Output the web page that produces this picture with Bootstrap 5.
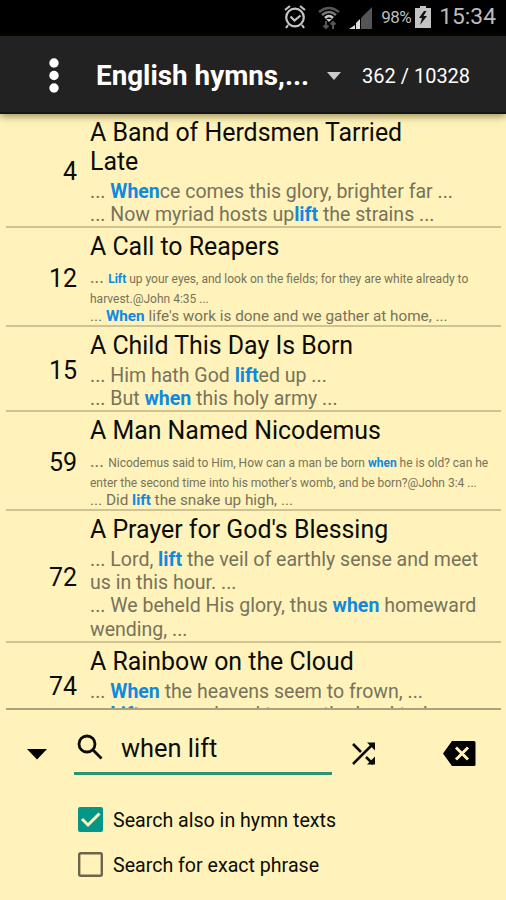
<!DOCTYPE html>
<html lang="en">
<head>
<meta charset="utf-8">
<meta name="viewport" content="width=device-width, initial-scale=1">
<title>English hymns</title>
<link href="https://cdn.jsdelivr.net/npm/bootstrap@5.3.0/dist/css/bootstrap.min.css" rel="stylesheet">
<style>
  body { width: 506px; height: 900px; background: #fff3bb; font-family: Roboto, "Liberation Sans", sans-serif; color: #0c0c08; white-space: nowrap; }
  svg { display: block; flex: none; }
  .statusbar { height: 36px; background: #000; color: #bdbdbd; padding-right: 10px; padding-bottom: 3px; }
  .clock { font-size: 22.8px; line-height: 34px; margin-left: 8px; }
  .charge { font-size: 17px; letter-spacing: -.5px; line-height: 34px; }
  .appbar { height: 78px; background: #222; color: #fff; padding: 3px 0 0 48px; border-bottom: 2px solid #151515; box-shadow: 0 2px 8px rgba(60,50,0,.55); z-index: 2; }
  .appname { font-size: 27.8px; font-weight: 700; margin-left: 36px; width: 231px; }
  .counter { font-size: 20px; margin-left: 21px; }
  .hymns { height: 596px; margin: 0 5px 0 6px; border-bottom: 2px solid #aaa37c; }
  .hymn { border-bottom: 2px solid #cdc492; padding-top: 4px; }
  .num { width: 71px; flex: none; font-size: 25px; text-align: right; line-height: 30px; }
  .body-col { margin-left: 13px; color: #77725a; font-size: 19.55px; line-height: 23.2px; }
  .ttl { font-size: 24.9px; line-height: 29px; color: #0c0c08; margin: 0 0 4.5px; font-weight: 400; }
  .long-ttl { margin-bottom: 3.5px; }
  .verse { font-size: 12px; line-height: 19.5px; }
  .verse-top { padding-top: 5px; }
  .dots { font-size: 17.5px; line-height: 10px; }
  .mid { font-size: 15.3px; line-height: 17px; margin-top: -1.5px; }
  b { color: #0f8ae0; font-weight: 700; }
  .h1r { height: 113px; } .h2r, .h4r { height: 99px; } .h3r { height: 85px; }
  .h1r { height: 114px; }
  .h5r { height: 132px; } .h6r { height: 84px; border: 0; }
  .first-shift { margin-top: -.5px; }
  .panel { height: 190px; }
  .field { width: 258px; height: 65px; border-bottom: 3px solid #2b9474; padding: 13px 0 0 3px; margin-left: 26px; }
  .query { font-size: 25.4px; margin: 2px 0 0 17px; }
  .collapse-ico { margin: 23px 0 0 25px; }
  .shuffle-ico { margin: 23px 0 0 16px; }
  .clear-ico { margin: 22px 0 0 62px; }
  .opts { padding-top: 22px; }
  .opt { height: 45px; padding-left: 78px; font-size: 19.6px; gap: 10px; }
  .opt span { padding-top: 2px; }
</style>
</head>
<body class="d-flex flex-column overflow-hidden m-0">
<header class="statusbar d-flex align-items-center justify-content-end flex-shrink-0">
  <svg width="24" height="26" viewBox="0 0 24 26" fill="none" stroke="#c4c4c4" stroke-width="2.200"><circle cx="12" cy="13.500" r="8.800"/><path d="M7.500 12.500l4 4 6-5M2 6l5-4M22 6l-5-4" /><path d="M5 21l-2 3M19 21l2 3"/></svg>
  <svg class="ms-2 me-1" width="28" height="26" viewBox="0 0 28 26" fill="none" stroke-width="2.5"><path d="M4 8q10-8 20 0" stroke="#555"/><path d="M7 11q7-6 14 0" stroke="#777"/><path d="M10 14q4-4 8 0" stroke="#c8c8c8"/><path d="M14 18l-3-3h6z" fill="#c8c8c8" stroke="none"/><path d="M11 17v7M8.500 21.500L11 24l2.500-2.500M18 25v-7M15.500 20.500L18 18l2.500 2.500" stroke="#555" stroke-width="2"/></svg>
  <svg width="26" height="26" viewBox="0 0 26 26"><path d="M2 25l6-4v4z" fill="#ddd"/><path d="M9 19l4-4v10H9z" fill="#ddd"/><path d="M14 14L25 3v22H14z" fill="#555"/></svg>
  <span class="charge ms-2">98%</span>
  <svg class="ms-1" width="16" height="22" viewBox="0 0 16 22"><path d="M5 0h6v2h5v20H0V2h5z" fill="#c4c4c4"/><path d="M9 5L4 12h3l-2 7 7-9H8.500l3-5z" fill="#111"/></svg>
  <span class="clock">15:34</span>
</header>
<nav class="appbar d-flex align-items-center flex-shrink-0 position-relative">
  <svg width="12" height="36" viewBox="0 0 12 36" fill="#fff"><circle cx="6" cy="5" r="4.700"/><circle cx="6" cy="17.500" r="4.700"/><circle cx="6" cy="30" r="4.700"/></svg>
  <span class="appname">English hymns,...</span>
  <svg width="14" height="8" viewBox="0 0 14 8"><path d="M0 0h14L7 8z" fill="#ccc"/></svg>
  <span class="counter">362 / 10328</span>
</nav>
<main class="hymns overflow-hidden flex-shrink-0">
  <article class="hymn h1r d-flex"><div class="num align-self-center">4</div><div class="body-col"><h2 class="ttl long-ttl">A Band of Herdsmen Tarried<br>Late</h2><div>... <b>When</b>ce comes this glory, brighter far ...</div><div>... Now myriad hosts up<b>lift</b> the strains ...</div></div></article>
  <article class="hymn h2r d-flex"><div class="num align-self-center">12</div><div class="body-col first-shift"><h2 class="ttl">A Call to Reapers</h2><div class="verse verse-top"><span class="dots">... </span><b>Lift</b> up your eyes, and look on the fields; for they are white already to</div><div class="verse">harvest.@John 4:35 ...</div><div class="mid">... <b>When</b> life's work is done and we gather at home, ...</div></div></article>
  <article class="hymn h3r d-flex"><div class="num align-self-center">15</div><div class="body-col first-shift"><h2 class="ttl">A Child This Day Is Born</h2><div>... Him hath God <b>lift</b>ed up ...</div><div>... But <b>when</b> this holy army ...</div></div></article>
  <article class="hymn h4r d-flex"><div class="num align-self-center">59</div><div class="body-col first-shift"><h2 class="ttl">A Man Named Nicodemus</h2><div class="verse verse-top"><span class="dots">... </span>Nicodemus said to Him, How can a man be born <b>when</b> he is old? can he</div><div class="verse">enter the second time into his mother's womb, and be born?@John 3:4 ...</div><div class="mid">... Did <b>lift</b> the snake up high, ...</div></div></article>
  <article class="hymn h5r d-flex"><div class="num align-self-center">72</div><div class="body-col first-shift"><h2 class="ttl">A Prayer for God's Blessing</h2><div>... Lord, <b>lift</b> the veil of earthly sense and meet<br>us in this hour. ...</div><div>... We beheld His glory, thus <b>when</b> homeward<br>wending, ...</div></div></article>
  <article class="hymn h6r d-flex"><div class="num align-self-center">74</div><div class="body-col first-shift"><h2 class="ttl">A Rainbow on the Cloud</h2><div>... <b>When</b> the heavens seem to frown, ...</div><div>... <b>Lift</b> your sad soul to see the Lord today, ...</div></div></article>
</main>
<section class="panel flex-shrink-0">
  <div class="d-flex align-items-center">
    <svg class="collapse-ico" width="23" height="12" viewBox="0 0 23 12"><path d="M2 1h20L12 11.500z" fill="#000"/></svg>
    <div class="field d-flex align-items-center">
      <svg width="27" height="27" viewBox="0 0 27 27" fill="none" stroke="#0c0c08" stroke-width="2.800"><circle cx="10" cy="10" r="8"/><path d="M16 16l8.500 8.500"/></svg>
      <span class="query">when lift</span>
    </div>
    <svg class="shuffle-ico" width="32" height="32" viewBox="0 0 32 32" fill="none" stroke="#0c0c08" stroke-width="2.600"><path d="M5 6l8 8M5 26L25 6M18 19l7 7"/><path d="M19 4.500h8v8zM27 18.500v8h-8z" fill="#0c0c08" stroke="none"/></svg>
    <svg class="clear-ico" width="36" height="28" viewBox="0 0 36 28"><path d="M10 1h22q1.500 0 1.500 1.500v22q0 1.500-1.500 1.500H10L1 13.500z" fill="#000"/><path d="M14 7.500l12 12M26 7.500L14 19.500" stroke="#fff3bb" stroke-width="3"/></svg>
  </div>
  <div class="opts">
    <div class="opt d-flex align-items-center">
      <svg width="25" height="25" viewBox="0 0 25 25"><rect width="25" height="25" rx="2" fill="#069688"/><path d="M4 12l6 6L21.500 6.500" fill="none" stroke="#fff3bb" stroke-width="3"/></svg>
      <span>Search also in hymn texts</span>
    </div>
    <div class="opt d-flex align-items-center">
      <svg width="25" height="25" viewBox="0 0 25 25"><rect x="1.200" y="1.200" width="22.600" height="22.600" rx="1.500" fill="none" stroke="#6b654c" stroke-width="2.400"/></svg>
      <span>Search for exact phrase</span>
    </div>
  </div>
</section>
<script src="https://cdn.jsdelivr.net/npm/bootstrap@5.3.0/dist/js/bootstrap.bundle.min.js"></script>
</body>
</html>
